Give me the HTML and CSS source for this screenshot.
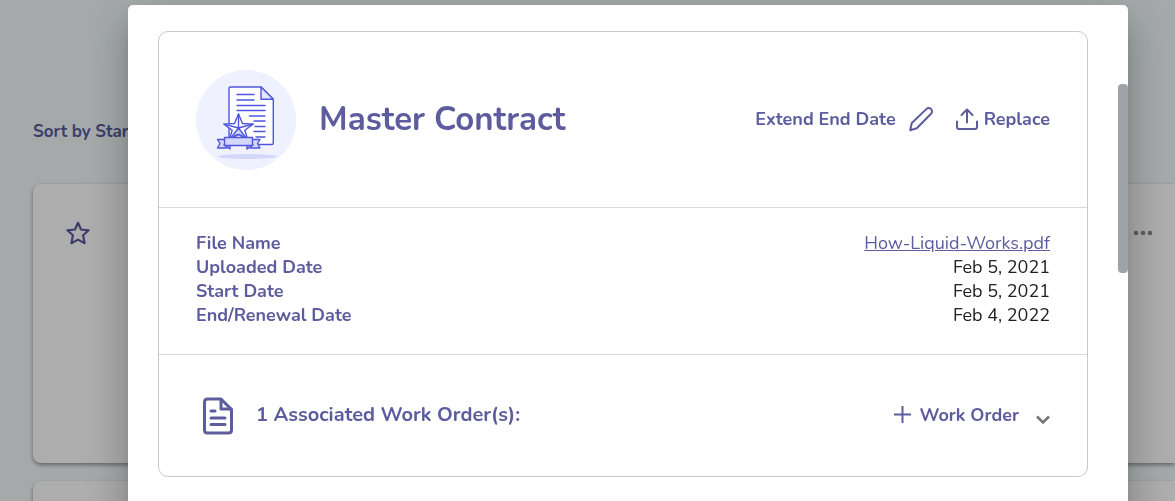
FILE: index.html
```html
<!DOCTYPE html>
<html lang="en">
<head>
    <meta charset="UTF-8">
    <meta name="viewport" content="width=device-width, initial-scale=1.0">
    <title>Master Contract</title>
    <link rel="stylesheet" href="styles.css">
</head>
<body>
    <main class="page">
        <div class="sort-label">Sort by Start Date</div>
        <div class="page-card">
            <button class="icon-btn star-btn" aria-label="Favorite">
                <svg width="24" height="24" viewBox="0 0 24 24" fill="none" stroke="currentColor" stroke-width="2.200" stroke-linejoin="round"><path d="M12 1.8l3 6.7 7.6.8-5.5 5 1.5 7.9-6.6-3.6-6.6 3.6 1.5-7.9-5.5-5 7.6-.8z"/></svg>
            </button>
            <button class="icon-btn more-btn" aria-label="More">
                <svg width="20" height="6" viewBox="0 0 20 6" fill="currentColor"><circle cx="3" cy="3" r="2.3"/><circle cx="10" cy="3" r="2.3"/><circle cx="17" cy="3" r="2.3"/></svg>
            </button>
        </div>
        <div class="page-card"></div>
    </main>

    <div class="overlay">
        <div class="dialog" role="dialog" aria-labelledby="contract-title">
            <div class="scroll-thumb"></div>
            <div class="contract">
                <div class="contract-header">
                    <!-- Contract illustration -->
                    <svg class="contract-art" width="100" height="100" viewBox="0 0 100 100" fill="none" stroke="#4f55dd" stroke-width="1.4" stroke-linejoin="round" stroke-linecap="round">
                        <circle cx="50" cy="50" r="50" fill="#f0f1ff" stroke="none"/>
                        <ellipse cx="51.500" cy="86.500" rx="29.500" ry="2.500" fill="#d3d8fb" stroke="none"/>
                        <path d="M34.500 17H65l12.300 12.300V73q0 1.500-1.500 1.500H33V18.500Q33 17 34.500 17z" fill="#fff"/>
                        <path d="M65 17v12.300h12.300z" fill="#e6e8fd"/>
                        <path d="M41 24.500h17M41 30h17M41 35.500h28M41 40.500h28M53.500 46H69M58 51h11M59 56.500h10M58 61.500h11M60 67h9"/>
                        <path d="M31 69.500H21.500l2.500 4-2.500 4.500H31M54 69.500h10l-2.500 4 2.500 4.500H54" fill="#d3d8fb"/>
                        <path d="M28 75l6 4v-4M57 75L51 79v-4" fill="#aeb5f5"/>
                        <path d="M42.500 44l4 9.500 10.500.6-8.200 6.200L52 70.500l-9.500-6-9.500 6 3.200-10.200L28 54.100l10.500-.6z" fill="#fff"/>
                        <path d="M42.500 64.500L33 70v-1.500l9.500-10 9.500 10V70z" fill="#d3d8fb" stroke="none"/>
                        <path d="M42.500 44v14l14.500-4M42.500 58L28 54.100M42.500 58l-9.500 12.500M42.500 58L52 70.500M37 68q5.500-7 11 0"/>
                        <path d="M28.500 67.500h28v8h-28z" fill="#d3d8fb"/>
                    </svg>
                    <h1 class="contract-title" id="contract-title">Master Contract</h1>
                    <div class="header-actions">
                        <button class="text-btn extend-btn">
                            Extend End Date
                            <svg width="26" height="26" viewBox="0 0 26 26" fill="none" stroke="currentColor" stroke-width="2" stroke-linejoin="round"><path d="M2.200 24.300l1.600-7.300L18.300 3.100a3.200 3.200 0 0 1 4.700 0 3.200 3.200 0 0 1 0 4.700L8.800 22.200z"/></svg>
                        </button>
                        <button class="text-btn replace-btn">
                            <svg width="22" height="22" viewBox="0 0 22 22" fill="none" stroke="currentColor" stroke-width="2" stroke-linejoin="round" stroke-linecap="round"><path d="M1 13.500V19q0 2 2 2h16q2 0 2-2v-5.500M11 14.500V1.500M5.500 7L11 1.500 16.500 7"/></svg>
                            Replace
                        </button>
                    </div>
                </div>

                <dl class="details">
                    <div class="detail-row"><dt>File Name</dt><dd><a href="#">How-Liquid-Works.pdf</a></dd></div>
                    <div class="detail-row"><dt>Uploaded Date</dt><dd>Feb 5, 2021</dd></div>
                    <div class="detail-row"><dt>Start Date</dt><dd>Feb 5, 2021</dd></div>
                    <div class="detail-row"><dt>End/Renewal Date</dt><dd>Feb 4, 2022</dd></div>
                </dl>

                <div class="orders">
                    <svg width="32" height="38" viewBox="0 0 32 38" fill="none" stroke="currentColor" stroke-width="3" stroke-linejoin="round" stroke-linecap="round"><path d="M5.500 2H19l10.500 10.500V33q0 3-3 3h-21q-3 0-3-3V5q0-3 3-3z"/><path d="M19 2.500V12h10M9 14h4M9 21h14M9 27.500h14"/></svg>
                    <h2 class="orders-title">1 Associated Work Order(s):</h2>
                    <button class="text-btn add-btn">
                        <svg width="17" height="17" viewBox="0 0 17 17" fill="none" stroke="currentColor" stroke-width="2"><path d="M8.500 0v17M0 8.500h17"/></svg>
                        Work Order
                    </button>
                    <button class="icon-btn expand-btn" aria-label="Expand">
                        <svg width="14" height="10" viewBox="0 0 14 10" fill="none" stroke="currentColor" stroke-width="2.600"><path d="M1 1.500l6 6 6-6"/></svg>
                    </button>
                </div>
            </div>
        </div>
    </div>
</body>
</html>
```
FILE: styles.css
```css
* {
    box-sizing: border-box;
}
body {
    margin: 0;
    font-family: Nunito, Lato, sans-serif;
    font-size: 18px;
    line-height: 24px;
    color: #212121;
    background-color: #f3fafb;
    overflow: hidden;
}
button {
    padding: 0;
    border: none;
    background: none;
    font: inherit;
    color: inherit;
    cursor: pointer;
}
svg {
    display: block;
    flex: none;
}

/* Page behind the dialog */
.page {
    height: 100vh;
    padding: 120px 0 0 33px;
    overflow: hidden;
}
.sort-label {
    margin-bottom: 40px;
    font-size: 17px;
    font-weight: 700;
    color: #5c5c9e;
}
.page-card {
    display: flex;
    justify-content: space-between;
    align-items: flex-start;
    height: 279px;
    margin-bottom: 18px;
    padding: 37px 22px 0 33px;
    border-radius: 8px 0 0 8px;
    background-color: #fff;
    box-shadow: 0 2px 4px rgba(0, 0, 0, 0.4);
}
.star-btn {
    color: #5c5c9e;
}
.more-btn {
    padding-top: 9px;
    color: #8c8c8c;
}

/* Dialog */
.overlay {
    position: fixed;
    inset: 0;
    padding: 5px 47px 0 128px;
    background-color: rgba(0, 0, 0, 0.32);
    overflow: hidden;
}
.dialog {
    position: relative;
    min-height: 120vh;
    padding: 26px 40px 0 30px;
    border-radius: 5px;
    background-color: #fff;
    box-shadow: 0 11px 15px -7px rgba(0, 0, 0, 0.2), 0 24px 38px 3px rgba(0, 0, 0, 0.14), 0 9px 46px 8px rgba(0, 0, 0, 0.12);
}
.scroll-thumb {
    position: absolute;
    top: 79px;
    right: 0;
    width: 10px;
    height: 189px;
    border-radius: 4px;
    background-color: #9fa3a8;
}
.contract {
    border: 1px solid #c8c8c8;
    border-radius: 10px;
    color: #5c5c9e;
}
.contract-header {
    display: flex;
    align-items: center;
    padding: 38px 37px 37px;
    border-bottom: 1px solid #d9d9d9;
}
.contract-title {
    margin: 0 0 0 23px;
    font-size: 33px;
    line-height: 40px;
    font-weight: 700;
}
.header-actions {
    display: flex;
    align-items: center;
    gap: 22px;
    margin-left: auto;
    padding-bottom: 2px;
}
.text-btn {
    display: flex;
    align-items: center;
    font-weight: 700;
}
.extend-btn {
    gap: 12px;
}
.replace-btn {
    gap: 6px;
}

.details {
    margin: 0;
    padding: 23px 37px 27px;
    border-bottom: 1px solid #d9d9d9;
}
.detail-row {
    display: flex;
    justify-content: space-between;
}
.detail-row dt {
    font-weight: 700;
}
.detail-row dd {
    margin: 0;
    color: #212121;
}
.detail-row a {
    color: #5c5c9e;
}

.orders {
    display: flex;
    align-items: center;
    padding: 42px 37px 41px 43px;
}
.orders-title {
    margin: 0 0 3px 22px;
    font-size: 20px;
    line-height: 24px;
    font-weight: 700;
}
.add-btn {
    gap: 8px;
    margin: 0 0 3px auto;
}
.expand-btn {
    margin-left: 17px;
    padding-top: 8px;
    color: #757575;
}
```
